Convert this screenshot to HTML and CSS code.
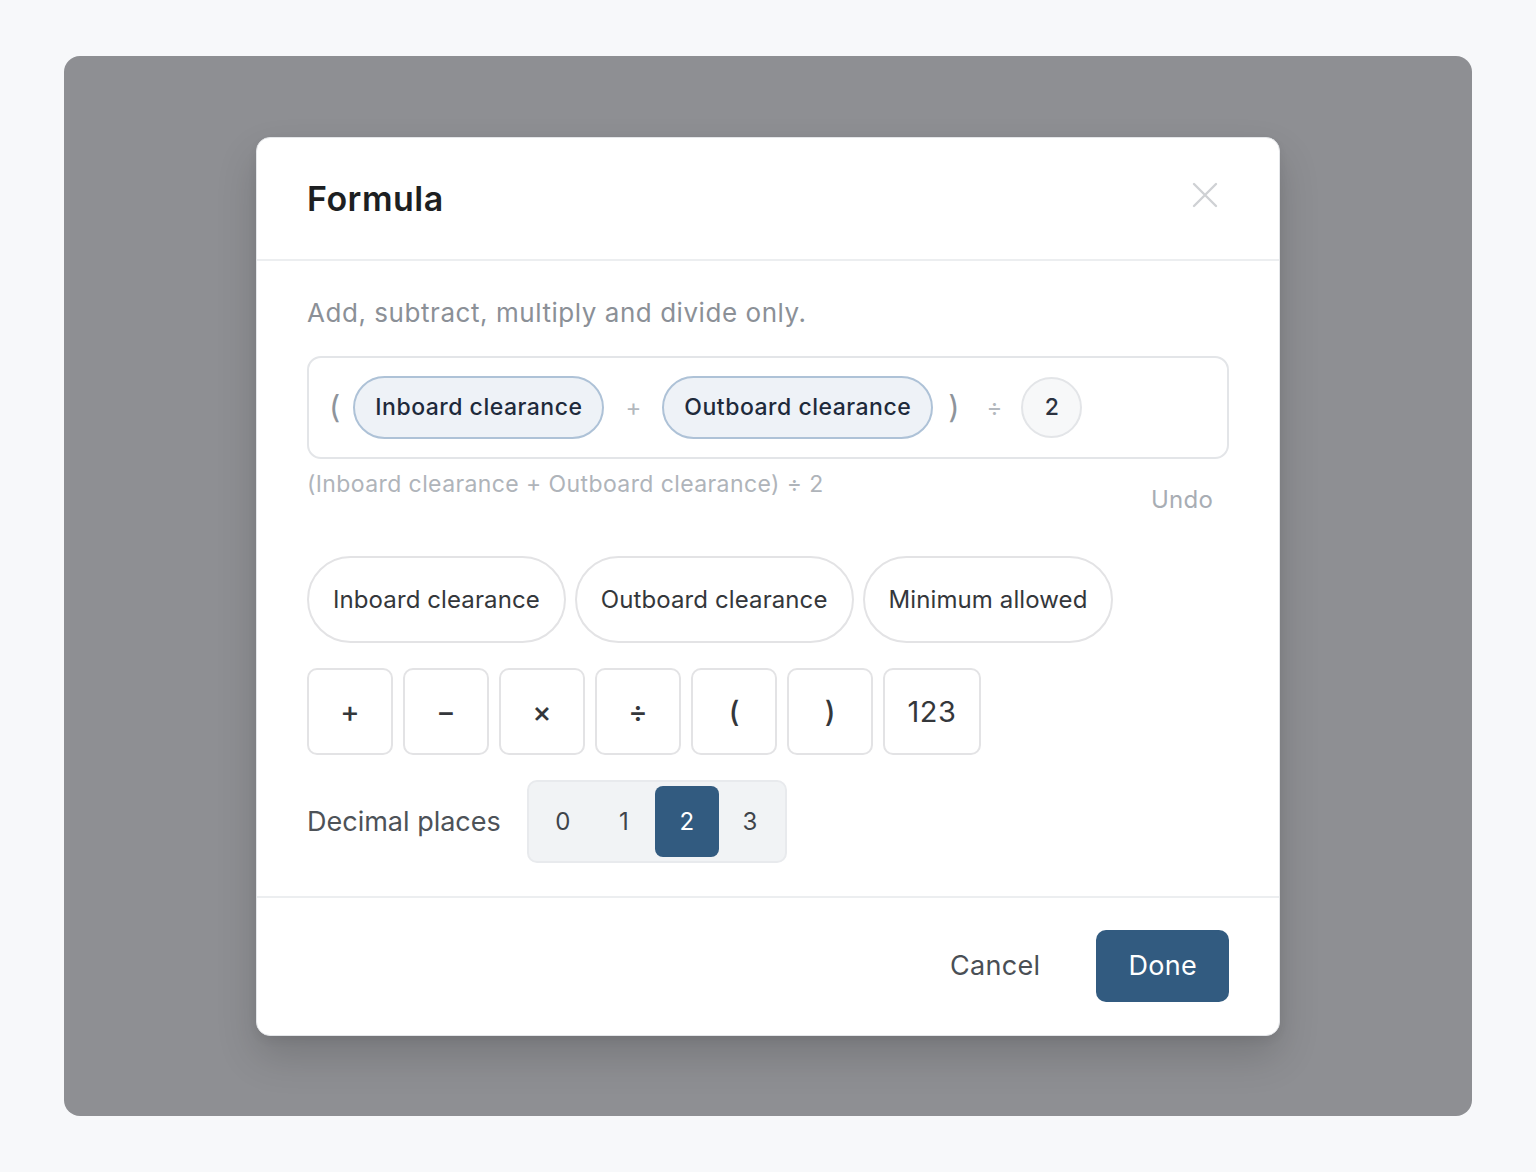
FILE: index.html
```html
<!DOCTYPE html>
<html lang="en">
<head>
<meta charset="utf-8">
<title>Formula</title>
<link rel="stylesheet" href="styles.css">
</head>
<body>
<div class="backdrop">
  <div class="modal">
    <div class="modal-header">
      <h1 class="title">Formula</h1>
      <button class="close" aria-label="Close">
        <svg width="26" height="26" viewBox="0 0 26 26"><path d="M2 2L24 24M24 2L2 24" stroke="#cfd1d4" stroke-width="2.4" stroke-linecap="round" fill="none"/></svg>
      </button>
    </div>
    <div class="modal-body">
      <p class="hint">Add, subtract, multiply and divide only.</p>
      <div class="formula-box">
        <span class="paren">(</span>
        <span class="token-chip">Inboard clearance</span>
        <span class="op">+</span>
        <span class="token-chip">Outboard clearance</span>
        <span class="paren paren-close">)</span>
        <span class="op">÷</span>
        <span class="token-num">2</span>
      </div>
      <div class="preview-row">
        <span class="preview">(Inboard clearance + Outboard clearance) ÷ 2</span>
        <button class="undo">Undo</button>
      </div>
      <div class="var-row">
        <button class="var-chip">Inboard clearance</button>
        <button class="var-chip">Outboard clearance</button>
        <button class="var-chip">Minimum allowed</button>
      </div>
      <div class="op-row">
        <button class="op-btn">+</button>
        <button class="op-btn">−</button>
        <button class="op-btn">×</button>
        <button class="op-btn">÷</button>
        <button class="op-btn">(</button>
        <button class="op-btn">)</button>
        <button class="op-btn op-num">123</button>
      </div>
      <div class="decimal-row">
        <span class="decimal-label">Decimal places</span>
        <div class="segment">
          <button class="seg-item">0</button>
          <button class="seg-item">1</button>
          <button class="seg-item selected">2</button>
          <button class="seg-item">3</button>
        </div>
      </div>
    </div>
    <div class="modal-footer">
      <button class="btn-cancel">Cancel</button>
      <button class="btn-done">Done</button>
    </div>
  </div>
</div>
</body>
</html>
```
FILE: styles.css
```css
* { box-sizing: border-box; }
html, body { margin: 0; padding: 0; }
body {
  background: #f7f8fa;
  font-family: Inter, "Noto Sans", "Liberation Sans", sans-serif;
  padding: 56px 64px;
}
button { font-family: inherit; cursor: pointer; }

.backdrop {
  height: 1060px;
  background: #8e8f93;
  border-radius: 16px;
  display: flex;
  align-items: center;
  justify-content: center;
}

.modal {
  width: 1024px;
  background: #fff;
  border: 1px solid #e4e6e9;
  border-radius: 14px;
  box-shadow: 0 20px 40px rgba(0, 0, 0, 0.16), 0 4px 10px rgba(0, 0, 0, 0.06);
}

.modal-header {
  height: 123px;
  padding: 0 50px;
  border-bottom: 2px solid #eceef0;
  display: flex;
  align-items: center;
  justify-content: space-between;
}
.title {
  margin: 0;
  font-size: 34px;
  font-weight: 600;
  color: #1d1f22;
  letter-spacing: 0.5px;
}
.close {
  width: 48px;
  height: 48px;
  margin-top: -6px;
  border: 0;
  background: transparent;
  display: flex;
  align-items: center;
  justify-content: center;
  padding: 0;
}

.modal-body {
  padding: 34px 50px 33px;
}
.hint {
  margin: 0;
  font-size: 26px;
  line-height: 36px;
  color: #8b9097;
  letter-spacing: 0.55px;
}

.formula-box {
  margin-top: 25px;
  height: 103px;
  border: 2px solid #e3e5e8;
  border-radius: 14px;
  padding: 0 20px;
  display: flex;
  align-items: center;
  gap: 13px;
}
.paren {
  font-size: 31px;
  color: #8e949b;
  line-height: 1;
  margin-top: -2px;
}
.paren-close { margin-left: 2px; margin-right: 6px; }
.op {
  font-size: 24px;
  color: #b3b8be;
  padding: 0 8px;
}
.token-chip {
  height: 63px;
  padding: 0 20px;
  display: flex;
  align-items: center;
  border: 2px solid #aec2d7;
  background: #eef2f7;
  border-radius: 32px;
  font-size: 23px;
  font-weight: 500;
  letter-spacing: 0.5px;
  color: #1e2a3b;
}
.token-num {
  width: 61px;
  height: 61px;
  margin-left: -2px;
  border-radius: 50%;
  border: 2px solid #e3e5e8;
  background: #f7f8f9;
  display: flex;
  align-items: center;
  justify-content: center;
  font-size: 23px;
  font-weight: 500;
  color: #2b3240;
}

.preview-row {
  display: flex;
  justify-content: space-between;
  align-items: flex-start;
}
.preview {
  margin-top: 10px;
  font-size: 23px;
  line-height: 30px;
  color: #afb4ba;
  letter-spacing: 0.4px;
}
.undo {
  margin-top: 20px;
  border: 0;
  background: transparent;
  padding: 6px 16px;
  font-size: 24px;
  line-height: 30px;
  color: #a8adb4;
  letter-spacing: 0.2px;
}

.var-row {
  margin-top: 35px;
  display: flex;
  gap: 9px;
}
.var-chip {
  height: 87px;
  padding: 0 24px;
  border: 2px solid #e3e3e5;
  border-radius: 44px;
  background: #fff;
  font-size: 24px;
  color: #34373b;
  letter-spacing: 0.1px;
}

.op-row {
  margin-top: 25px;
  display: flex;
  gap: 10px;
}
.op-btn {
  width: 86px;
  height: 87px;
  border: 2px solid #e3e3e5;
  border-radius: 10px;
  background: #fff;
  font-size: 29px;
  font-weight: 500;
  color: #34373b;
  padding: 0;
}
.op-num {
  width: 98px;
  font-size: 29px;
  font-weight: 400;
  letter-spacing: 0.5px;
}

.decimal-row {
  margin-top: 25px;
  display: flex;
  align-items: center;
  gap: 26px;
}
.decimal-label {
  font-size: 27px;
  color: #4d5258;
}
.segment {
  display: flex;
  padding: 4px;
  border: 2px solid #e8eaed;
  border-radius: 10px;
  background: #f1f3f5;
}
.seg-item {
  width: 62px;
  height: 71px;
  border: 0;
  background: transparent;
  border-radius: 8px;
  font-size: 24px;
  color: #3f444a;
  padding: 0;
}
.seg-item:first-child { width: 60px; }
.seg-item.selected {
  width: 64px;
  background: #325b80;
  color: #fff;
}

.modal-footer {
  border-top: 2px solid #eceef0;
  padding: 32px 50px 33px;
  display: flex;
  justify-content: flex-end;
  align-items: center;
  gap: 32px;
}
.btn-cancel {
  border: 0;
  background: transparent;
  padding: 0 24px;
  height: 71px;
  font-size: 27px;
  color: #4a4f55;
  letter-spacing: 0.3px;
}
.btn-done {
  height: 72px;
  padding: 0 32px;
  border: 0;
  border-radius: 10px;
  background: #325b80;
  color: #fff;
  font-size: 27px;
  letter-spacing: 0.3px;
}
```
